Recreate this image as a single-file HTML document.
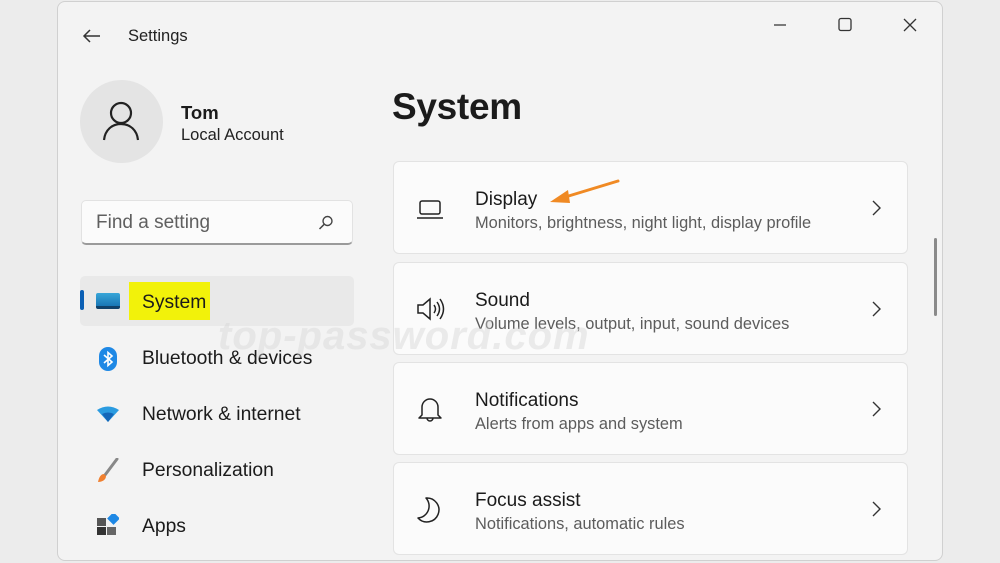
<!DOCTYPE html>
<html><head><meta charset="utf-8"><style>
*{margin:0;padding:0;box-sizing:border-box}
body{width:1000px;height:563px;overflow:hidden;background:#ececec;font-family:"Liberation Sans",sans-serif;position:relative;color:#1b1b1b}
.win{position:absolute;left:57px;top:1px;width:886px;height:560px;background:#f3f3f3;border:1px solid #d0d0d0;border-radius:8px;overflow:hidden}
.abs{position:absolute}
.card{position:absolute;left:335px;width:515px;height:93px;background:#fbfbfb;border:1px solid #e3e3e3;border-radius:6px}
.card .t{position:absolute;left:81px;top:27px;font-size:19px;color:#1b1b1b}
.card .s{position:absolute;left:81px;top:52px;font-size:16.4px;color:#5c5c5c}
.card .ic{position:absolute;left:22px;top:30px}
.card .ch{position:absolute;right:26px;top:36px}
.nav{position:absolute;left:84px;font-size:19.3px;color:#1b1b1b}
</style></head><body>
<div class="win">
  <svg class="abs" style="left:24px;top:26px" width="20" height="16" viewBox="0 0 20 16"><path d="M18 8H2M8 2L2 8l6 6" fill="none" stroke="#333" stroke-width="1.5"/></svg>
  <div class="abs" style="left:70px;top:25px;font-size:16.5px;color:#222">Settings</div>
  <svg class="abs" style="left:713px;top:15px" width="160" height="16" viewBox="0 0 160 16">
    <path d="M3 8h12" stroke="#333" stroke-width="1.3"/>
    <rect x="68" y="1.5" width="12" height="12" rx="2" fill="none" stroke="#333" stroke-width="1.3"/>
    <path d="M133 2l12 12M145 2l-12 12" stroke="#333" stroke-width="1.3"/>
  </svg>
  <div class="abs" style="left:22px;top:78px;width:83px;height:83px;border-radius:50%;background:#e4e4e4"></div>
  <svg class="abs" style="left:40px;top:96px" width="46" height="46" viewBox="0 0 46 46"><circle cx="23" cy="15" r="10" fill="none" stroke="#222" stroke-width="2.2"/><path d="M6 42c1-10 8-16 17-16s16 6 17 16" fill="none" stroke="#222" stroke-width="2.2"/></svg>
  <div class="abs" style="left:123px;top:100px;font-size:18.5px;font-weight:bold">Tom</div>
  <div class="abs" style="left:123px;top:124px;font-size:16.5px;color:#222">Local Account</div>
  <div class="abs" style="left:23px;top:198px;width:272px;height:45px;background:#fbfbfb;border:1px solid #e2e2e2;border-bottom:2px solid #9a9a9a;border-radius:5px"></div>
  <div class="abs" style="left:38px;top:210px;font-size:19px;color:#5f5f5f">Find a setting</div>
  <svg class="abs" style="left:259px;top:212px" width="18" height="18" viewBox="0 0 18 18"><circle cx="10.5" cy="7" r="4.5" fill="none" stroke="#444" stroke-width="1.4"/><path d="M7.3 10.2L2.5 15" stroke="#444" stroke-width="1.5"/></svg>
  <div class="abs" style="left:22px;top:274px;width:274px;height:50px;background:#e9e9e9;border-radius:5px"></div>
  <div class="abs" style="left:22px;top:288px;width:4px;height:20px;background:#0a5fb4;border-radius:2px"></div>
  <div class="abs" style="left:38px;top:291px;width:24px;height:16px;background:linear-gradient(#38a6d8,#1976b5);border-radius:2px;border-bottom:3px solid #10416a"></div>
  <div class="abs" style="left:71px;top:280px;width:81px;height:38px;background:#f2f20a"></div>
  <div class="nav" style="top:290px">System</div>
  <svg class="abs" style="left:39px;top:345px" width="22" height="24" viewBox="0 0 22 24"><rect x="2" y="0" width="18" height="24" rx="9" fill="#1e88e5"/><path d="M7 8l8 7-4 3.5V5.5l4 3.5-8 7" fill="none" stroke="#fff" stroke-width="1.6"/></svg>
  <div class="nav" style="top:346px">Bluetooth &amp; devices</div>
  <svg class="abs" style="left:38px;top:404px" width="24" height="16" viewBox="0 0 24 16"><path d="M1 4Q12-3 23 4L12 16z" fill="#2a9be0"/><path d="M6 8Q12 5 18 8L12 16z" fill="#1466b8"/></svg>
  <div class="nav" style="top:402px">Network &amp; internet</div>
  <svg class="abs" style="left:38px;top:456px" width="24" height="26" viewBox="0 0 24 26"><path d="M21 1L9 17" stroke="#888" stroke-width="3" stroke-linecap="round"/><path d="M8 16c-3 0-5 3-6 8 4 0 8-2 8-6z" fill="#f08030"/></svg>
  <div class="nav" style="top:458px">Personalization</div>
  <svg class="abs" style="left:39px;top:512px" width="22" height="22" viewBox="0 0 22 22"><rect x="0" y="4" width="9" height="8" fill="#555"/><rect x="0" y="13" width="9" height="8" fill="#333"/><rect x="10" y="13" width="9" height="8" fill="#666"/><rect x="12" y="0" width="9" height="9" fill="#1e88e5" transform="rotate(45 16.5 4.5)"/></svg>
  <div class="nav" style="top:514px">Apps</div>
  <div class="abs" style="left:334px;top:84px;font-size:37px;font-weight:bold;color:#1b1b1b;letter-spacing:-0.3px">System</div>
  <div class="abs" style="left:876px;top:236px;width:3px;height:78px;background:#8a8a8a;border-radius:2px"></div>

  <div class="card" style="top:159px">
    <svg class="ic" style="top:38px" width="28" height="20" viewBox="0 0 28 20"><rect x="4" y="1" width="20" height="13" rx="2" fill="none" stroke="#222" stroke-width="1.5"/><path d="M1 18h26" stroke="#222" stroke-width="1.5"/></svg>
    <div class="t">Display</div><div class="s">Monitors, brightness, night light, display profile</div>
    <svg class="ch" style="top:38px" width="10" height="16" viewBox="0 0 10 16"><path d="M2 1l7 7-7 7" fill="none" stroke="#333" stroke-width="1.4"/></svg>
  </div>
  <svg class="abs" style="left:482px;top:176px" width="80" height="30" viewBox="0 0 80 30"><path d="M78 3L22 20" stroke="#f08a24" stroke-width="3" stroke-linecap="round"/><path d="M10 24L28 12 30 25z" fill="#f08a24"/></svg>
  <div class="card" style="top:260px">
    <svg class="ic" style="top:34px" width="30" height="24" viewBox="0 0 30 24"><path d="M2 8h5l7-6v20l-7-6H2z" fill="none" stroke="#222" stroke-width="1.5"/><path d="M18 8q3 4 0 8M21 5q5 7 0 14M24 2q7 10 0 20" fill="none" stroke="#222" stroke-width="1.5"/></svg>
    <div class="t">Sound</div><div class="s">Volume levels, output, input, sound devices</div>
    <svg class="ch" style="top:38px" width="10" height="16" viewBox="0 0 10 16"><path d="M2 1l7 7-7 7" fill="none" stroke="#333" stroke-width="1.4"/></svg>
  </div>
  <div class="card" style="top:360px">
    <svg class="ic" style="top:32px" width="28" height="28" viewBox="0 0 28 28"><path d="M6 20V12a8 8 0 0116 0v8l3 3H3z" fill="none" stroke="#222" stroke-width="1.5" stroke-linejoin="round"/><path d="M11 23a3 3 0 006 0" fill="none" stroke="#222" stroke-width="1.5"/></svg>
    <div class="t">Notifications</div><div class="s">Alerts from apps and system</div>
    <svg class="ch" style="top:38px" width="10" height="16" viewBox="0 0 10 16"><path d="M2 1l7 7-7 7" fill="none" stroke="#333" stroke-width="1.4"/></svg>
  </div>
  <div class="card" style="top:460px">
    <svg class="ic" style="top:33px" width="28" height="28" viewBox="0 0 28 28"><path d="M10 2a12 12 0 11-8 20 12 12 0 008-20z" fill="none" stroke="#222" stroke-width="1.5" stroke-linejoin="round"/></svg>
    <div class="t">Focus assist</div><div class="s">Notifications, automatic rules</div>
    <svg class="ch" style="top:38px" width="10" height="16" viewBox="0 0 10 16"><path d="M2 1l7 7-7 7" fill="none" stroke="#333" stroke-width="1.4"/></svg>
  </div>
  <div class="abs" style="left:160px;top:312px;font-size:40px;font-weight:bold;font-style:italic;color:rgba(210,210,210,0.4);font-family:'Liberation Sans',sans-serif;letter-spacing:1px">top-password.com</div>
</div>
</body></html>
